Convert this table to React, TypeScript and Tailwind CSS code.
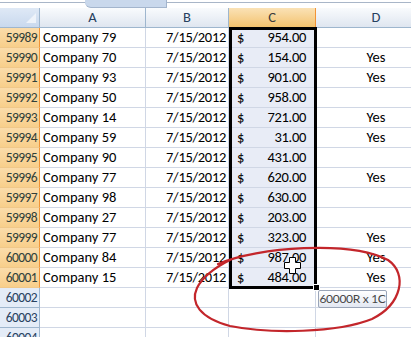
import React from "react";

const rows = [
  { n: "59989", co: "Company 79", amt: "954.00", yes: "" },
  { n: "59990", co: "Company 70", amt: "154.00", yes: "Yes" },
  { n: "59991", co: "Company 93", amt: "901.00", yes: "Yes" },
  { n: "59992", co: "Company 50", amt: "958.00", yes: "" },
  { n: "59993", co: "Company 14", amt: "721.00", yes: "Yes" },
  { n: "59994", co: "Company 59", amt: "31.00", yes: "Yes" },
  { n: "59995", co: "Company 90", amt: "431.00", yes: "" },
  { n: "59996", co: "Company 77", amt: "620.00", yes: "Yes" },
  { n: "59997", co: "Company 98", amt: "630.00", yes: "" },
  { n: "59998", co: "Company 27", amt: "203.00", yes: "" },
  { n: "59999", co: "Company 77", amt: "323.00", yes: "Yes" },
  { n: "60000", co: "Company 84", amt: "987.00", yes: "Yes" },
  { n: "60001", co: "Company 15", amt: "484.00", yes: "Yes" },
];

const empty = ["60002", "60003", "60004"];

function ColHead({ label, w, active }: { label: string; w: string; active?: boolean }) {
  return (
    <div
      className={
        active
          ? `${w} h-full shrink-0 flex items-center justify-center border-r border-b border-[#f29436] bg-gradient-to-b from-[#fae2b6] to-[#f3c26c] text-[#3a3a3a]`
          : `${w} h-full shrink-0 flex items-center justify-center border-r border-b border-[#9eb6ce] bg-gradient-to-b from-[#f9fbfd] to-[#dfe6f0] text-[#27415f]`
      }
    >
      {label}
    </div>
  );
}

export default function App() {
  return (
    <div className="relative w-[411px] h-[337px] overflow-hidden bg-white font-[Carlito,Lato,sans-serif] text-[14.5px] leading-none text-black">
      {/* strip above the headers */}
      <div className="relative h-[8px] border-t-[2px] border-white">
        <div className="h-px bg-[#a9b6c8]" />
        <div className="absolute left-[85px] top-[-2px] w-[82px] h-[8px] rounded-bl-[6px] bg-[#c9d8ec] border-r border-b border-[#a3b5cd]" />
      </div>

      {/* column headers */}
      <div className="flex h-[20px]">
        <div className="relative w-[40px] h-full shrink-0 border-r border-b border-[#9eb6ce] bg-gradient-to-b from-[#dfe9f6] to-[#c9d9ee]">
          <svg className="absolute left-[26px] top-[5px]" width="10" height="10" viewBox="0 0 10 10">
            <polygon points="10,0 10,10 0,10" fill="#eef3fa" />
          </svg>
        </div>
        <ColHead label="A" w="w-[106px]" />
        <ColHead label="B" w="w-[83px]" />
        <ColHead label="C" w="w-[87px]" active />
        <ColHead label="D" w="w-[121px]" />
      </div>

      {rows.map((r) => (
        <div key={r.n} className="flex h-[20px]">
          <div className="w-[40px] shrink-0 flex items-end justify-end pr-[2px] pb-[3px] border-r border-b border-r-[#f29436] border-b-[#f0c88a] bg-gradient-to-b from-[#fbdcaa] to-[#f8cf8b] text-[#2f3f3a] text-[13.5px] tracking-[-0.6px]">
            {r.n}
          </div>
          <div className="w-[106px] shrink-0 flex items-end pl-[3px] pb-[3px] border-r border-b border-[#d0d7e5]">
            {r.co}
          </div>
          <div className="w-[83px] shrink-0 flex items-end justify-end pr-[2px] pb-[3px] border-r border-b border-[#d0d7e5] tracking-[-0.3px]">
            7/15/2012
          </div>
          <div className="w-[87px] shrink-0 flex items-end justify-between pl-[8px] pr-[9px] pb-[3px] border-r border-b border-[#d0d7e5] bg-[#e8ecf6]">
            <span>$</span>
            <span className="tracking-[-0.3px]">{r.amt}</span>
          </div>
          <div className="w-[121px] shrink-0 flex items-end justify-center pb-[3px] border-r border-b border-[#d0d7e5]">
            {r.yes}
          </div>
        </div>
      ))}

      {empty.map((n) => (
        <div key={n} className="flex h-[20px]">
          <div className="w-[40px] shrink-0 flex items-end justify-end pr-[2px] pb-[3px] border-r border-b border-[#9eb6ce] bg-[#e4ecf7] text-[#27415f] text-[13.5px] tracking-[-0.6px]">
            {n}
          </div>
          <div className="w-[106px] shrink-0 border-r border-b border-[#d0d7e5]" />
          <div className="w-[83px] shrink-0 border-r border-b border-[#d0d7e5]" />
          <div className="w-[87px] shrink-0 border-r border-b border-[#d0d7e5]" />
          <div className="w-[121px] shrink-0 border-r border-b border-[#d0d7e5]" />
        </div>
      ))}

      {/* selection box and fill handle */}
      <div className="absolute left-[229px] top-[27px] w-[88px] h-[262px] border-[3px] border-black pointer-events-none" />
      <div className="absolute left-[313px] top-[284px] w-[7px] h-[7px] bg-black border border-white" />

      {/* red hand-drawn ring */}
      <svg className="absolute left-0 top-0 pointer-events-none" width="411" height="337" viewBox="0 0 411 337">
        <path
          d="M218 264 C 258 247, 350 240, 388 260 C 408 274, 402 304, 372 319 C 337 333, 270 334, 230 326 C 200 318, 190 303, 197 288 C 203 276, 214 268, 230 260"
          fill="none"
          stroke="#c3262b"
          strokeWidth="2.2"
          strokeLinecap="round"
        />
      </svg>

      {/* mouse cursor */}
      <svg className="absolute left-[283px] top-[256px]" width="19" height="19" viewBox="0 0 19 19">
        <path d="M6.5 1.5 H12.5 V6.5 H17.5 V12.5 H12.5 V17.5 H6.5 V12.5 H1.5 V6.5 H6.5 Z" fill="white" stroke="black" strokeWidth="1" />
      </svg>

      {/* tooltip */}
      <div className="absolute left-[318px] top-[290px] w-[69px] h-[18px] flex items-center justify-center whitespace-nowrap rounded-[2px] border border-[#9aa5b8] bg-gradient-to-b from-[#ffffff] to-[#e3e8f2] text-[12px] tracking-[-0.3px] text-[#464646] font-[Lato,sans-serif]">
        60000R x 1C
      </div>
    </div>
  );
}
